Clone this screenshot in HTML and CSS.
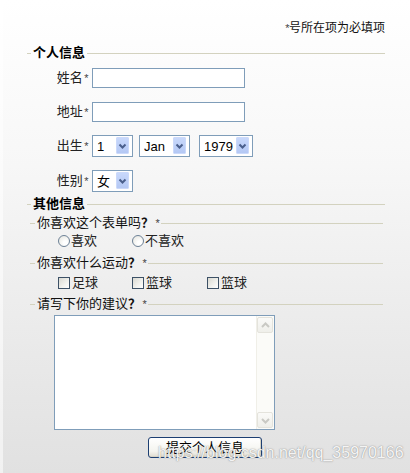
FILE: index.html
```html
<!DOCTYPE html>
<html lang="zh-CN">
<head>
<meta charset="utf-8">
<title>个人信息</title>
<link rel="stylesheet" href="styles.css">
</head>
<body>
<div class="page">
  <p class="note"><span class="req">*</span>号所在项为必填项</p>
  <form class="form">
    <fieldset class="group personal">
      <legend>个人信息</legend>
      <div class="row r1">
        <label class="lbl">姓名<span class="req">*</span></label>
        <input class="text" type="text">
      </div>
      <div class="row r2">
        <label class="lbl">地址<span class="req">*</span></label>
        <input class="text" type="text">
      </div>
      <div class="row r3">
        <label class="lbl">出生<span class="req">*</span></label>
        <span class="sel s-day"><select><option>1</option></select><span class="arrow"><svg width="13" height="16" viewBox="0 0 13 16"><polyline points="3.5,6.5 6.5,9.5 9.5,6.5" fill="none" stroke="#4a5f8c" stroke-width="2"/></svg></span></span>
        <span class="sel s-month"><select><option>Jan</option></select><span class="arrow"><svg width="13" height="16" viewBox="0 0 13 16"><polyline points="3.5,6.5 6.5,9.5 9.5,6.5" fill="none" stroke="#4a5f8c" stroke-width="2"/></svg></span></span>
        <span class="sel s-year"><select><option>1979</option></select><span class="arrow"><svg width="13" height="16" viewBox="0 0 13 16"><polyline points="3.5,6.5 6.5,9.5 9.5,6.5" fill="none" stroke="#4a5f8c" stroke-width="2"/></svg></span></span>
      </div>
      <div class="row r4">
        <label class="lbl">性别<span class="req">*</span></label>
        <span class="sel s-day"><select><option>女</option></select><span class="arrow"><svg width="13" height="16" viewBox="0 0 13 16"><polyline points="3.5,6.5 6.5,9.5 9.5,6.5" fill="none" stroke="#4a5f8c" stroke-width="2"/></svg></span></span>
      </div>
    </fieldset>

    <fieldset class="group other">
      <legend>其他信息</legend>
      <fieldset class="sub q1">
        <legend>你喜欢这个表单吗<b>？</b><span class="req">*</span></legend>
        <div class="options radios">
          <label class="opt"><input type="radio" name="like"><span>喜欢</span></label>
          <label class="opt"><input type="radio" name="like"><span>不喜欢</span></label>
        </div>
      </fieldset>
      <fieldset class="sub q2">
        <legend>你喜欢什么运动<b>？</b><span class="req">*</span></legend>
        <div class="options checks">
          <label class="opt"><input type="checkbox"><span>足球</span></label>
          <label class="opt"><input type="checkbox"><span>篮球</span></label>
          <label class="opt"><input type="checkbox"><span>篮球</span></label>
        </div>
      </fieldset>
      <fieldset class="sub q3">
        <legend>请写下你的建议<b>？</b><span class="req">*</span></legend>
        <div class="textbox">
          <textarea></textarea>
          <div class="scrollbar">
            <span class="sbtn"><svg width="15" height="15" viewBox="0 0 15 15"><polyline points="4,9 7.5,5.5 11,9" fill="none" stroke="#c9c9c4" stroke-width="2"/></svg></span>
            <span class="sbtn"><svg width="15" height="15" viewBox="0 0 15 15"><polyline points="4,6 7.5,9.5 11,6" fill="none" stroke="#c9c9c4" stroke-width="2"/></svg></span>
          </div>
        </div>
      </fieldset>
    </fieldset>

    <div class="actions"><button type="button" class="submit">提交个人信息</button></div>
  </form>
  <div class="watermark">https://blog.csdn.net/qq_35970166</div>
</div>
</body>
</html>
```

FILE: styles.css
```css
html {
  height: 100%;
  background: linear-gradient(180deg, #ffffff 0%, #f7f7f7 35%, #e9e9e9 75%, #e1e1e1 100%);
}
body {
  margin: 0;
  min-height: 100%;
  font-family: "Liberation Sans", "Noto Sans CJK SC", sans-serif;
  font-size: 13px;
  color: #000;
  border-left: 3px solid rgba(255, 255, 255, 0.55);
  box-sizing: border-box;
}
.page {
  position: relative;
  padding: 20px 25px 0 24px;
}
.note {
  margin: 0;
  font-size: 12px;
  line-height: 16px;
  text-align: right;
  color: #111;
}
.req {
  font-style: italic;
  font-size: 11px;
  color: #444;
  margin-left: 1px;
}
.form { margin: 0; }

/* fieldsets: only the top rule shows */
.group, .sub {
  margin: 0;
  padding: 0;
  border: 0;
  border-top: 1px solid #d3d2bf;
  min-width: 0;
}
.group > legend {
  margin-left: 4px;
  padding: 0 2px;
  font-weight: bold;
  font-size: 13px;
  line-height: 16px;
}
.sub > legend {
  margin-left: 5px;
  padding: 0 2px;
  font-size: 13px;
  line-height: 16px;
  color: #111;
}
.sub > legend b { font-weight: bold; }

.personal {
  margin-top: 9px;
  padding-top: 7px;
}
.row {
  display: flex;
  align-items: center;
  margin-bottom: 13px;
}
.row.r1 { margin-bottom: 14px; }
.row.r4 { margin-bottom: 0; }
.lbl {
  width: 61px;
  margin-right: 4px;
  text-align: right;
  line-height: 16px;
  color: #222;
}
.text {
  box-sizing: border-box;
  width: 153px;
  height: 20px;
  margin: 0;
  border: 1px solid #7f9db9;
  background: #fff;
  padding: 0 3px;
  font: inherit;
}

/* XP-like select */
.sel {
  position: relative;
  display: inline-block;
  height: 22px;
}
.sel select {
  appearance: none;
  -webkit-appearance: none;
  box-sizing: border-box;
  width: 100%;
  height: 100%;
  margin: 0;
  padding: 0 0 0 4px;
  border: 1px solid #7f9db9;
  border-radius: 0;
  background: #fff;
  color: #000;
  font-family: "Liberation Sans", "Noto Sans CJK SC", sans-serif;
  font-size: 13px;
}
.sel .arrow {
  position: absolute;
  right: 4px;
  top: 2px;
  width: 13px;
  height: 17px;
  box-sizing: border-box;
  background: linear-gradient(180deg, #c8d8fb, #b4c8f4);
  border: 1px solid #cbd9fa;
  border-radius: 1px;
  display: flex;
  align-items: center;
  justify-content: center;
  pointer-events: none;
}
.sel .arrow svg { display: block; flex: none; }
.s-day { width: 41px; }
.s-month { width: 51px; margin-left: 6px; }
.s-year { width: 54px; margin-left: 9px; }

/* other info */
.other { margin-top: 4px; }
.sub {
  margin-left: 3px;
  margin-right: 2px;
}
.q1 { margin-top: 3px; padding-top: 2px; }
.q2 { margin-top: 6px; padding-top: 4px; }
.q3 { margin-top: 5px; padding-top: 3px; }

.options {
  display: flex;
  height: 16px;
  align-items: center;
  margin-left: 28px;
}
.opt {
  display: flex;
  align-items: center;
  width: 74px;
  line-height: 16px;
  color: #222;
}
.checks .opt:nth-child(2) { width: 75px; }
.opt input {
  appearance: none;
  -webkit-appearance: none;
  box-sizing: border-box;
  width: 12px;
  height: 12px;
  margin: 0 1px 0 0;
  flex: none;
}
.radios input {
  border: 1px solid #6d8196;
  border-radius: 50%;
  background: radial-gradient(circle at 65% 70%, #ffffff 20%, #e6e6e0 90%);
}
.checks input {
  border: 1px solid #3d5166;
  background: linear-gradient(135deg, #d9d9d2 0%, #f2f2ee 60%, #ffffff 100%);
  margin-right: 2px;
}

.textbox {
  display: flex;
  box-sizing: border-box;
  width: 221px;
  height: 115px;
  margin-left: 24px;
  border: 1px solid #7f9db9;
  background: #fff;
}
.textbox textarea {
  flex: 1;
  border: 0;
  margin: 0;
  padding: 2px;
  resize: none;
  outline: none;
  background: #fff;
  font: inherit;
}
.scrollbar {
  width: 17px;
  display: flex;
  flex-direction: column;
  justify-content: space-between;
  background: #fbfbf8;
  border-left: 1px solid #f0efe8;
  padding: 1px 0;
}
.sbtn {
  display: block;
  box-sizing: border-box;
  width: 16px;
  height: 16px;
  border: 1px solid #e4e3dc;
  border-radius: 2px;
  background: linear-gradient(180deg, #fafaf8, #efefea);
}
.sbtn svg { display: block; }

.actions {
  margin-top: 7px;
  padding-right: 2px;
  text-align: center;
}
.submit {
  box-sizing: border-box;
  width: 114px;
  height: 21px;
  margin: 0;
  padding: 0;
  border: 1px solid #1d3f72;
  border-radius: 3px;
  background: linear-gradient(180deg, #ffffff 0%, #f4f4ef 70%, #dedbd0 100%);
  box-shadow: inset -1px -1px 0 #d6d2c4;
  font-family: "Liberation Sans", "Noto Sans CJK SC", sans-serif;
  font-size: 13px;
  line-height: 19px;
  color: #000;
}

.watermark {
  position: absolute;
  left: 155px;
  top: 444px;
  font-family: "Liberation Sans", sans-serif;
  font-size: 16px;
  line-height: 18px;
  color: rgba(255, 255, 255, 0.92);
  text-shadow: 0 0 1px rgba(90, 90, 90, 0.6), 0 0 2px rgba(120, 120, 120, 0.4);
  white-space: nowrap;
  pointer-events: none;
}
```
